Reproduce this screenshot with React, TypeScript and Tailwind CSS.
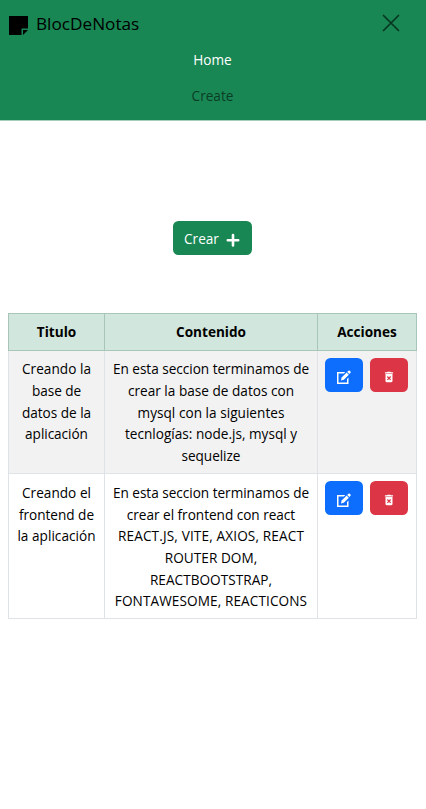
import React from "react";
import { MdDeleteForever } from "react-icons/md";

type Line = { text: string; track: string };
type Note = { title: Line[]; content: Line[] };

const notes: Note[] = [
  {
    title: [
      { text: "Creando la", track: "tracking-[0.05px]" },
      { text: "base de", track: "tracking-[-0.05px]" },
      { text: "datos de la", track: "tracking-[-0.02px]" },
      { text: "aplicación", track: "tracking-[-0.05px]" },
    ],
    content: [
      { text: "En esta seccion terminamos de", track: "tracking-[-0.02px]" },
      { text: "crear la base de datos con", track: "tracking-[0.01px]" },
      { text: "mysql con la siguientes", track: "tracking-[0.03px]" },
      { text: "tecnlogías: node.js, mysql y", track: "tracking-[0.01px]" },
      { text: "sequelize", track: "tracking-[-0.05px]" },
    ],
  },
  {
    title: [
      { text: "Creando el", track: "tracking-[0.03px]" },
      { text: "frontend de", track: "tracking-[-0.02px]" },
      { text: "la aplicación", track: "tracking-[0.03px]" },
    ],
    content: [
      { text: "En esta seccion terminamos de", track: "tracking-[-0.02px]" },
      { text: "crear el frontend con react", track: "tracking-[-0.02px]" },
      { text: "REACT.JS, VITE, AXIOS, REACT", track: "tracking-[0.14px]" },
      { text: "ROUTER DOM,", track: "tracking-[0.04px]" },
      { text: "REACTBOOTSTRAP,", track: "tracking-[0.04px]" },
      { text: "FONTAWESOME, REACTICONS", track: "tracking-[0.1px]" },
    ],
  },
];

function Lines({ lines }: { lines: Line[] }) {
  return (
    <div className="flex flex-col items-center whitespace-nowrap">
      {lines.map((l) => (
        <span key={l.text} className={l.track}>{l.text}</span>
      ))}
    </div>
  );
}

function NoteIcon() {
  return (
    <svg className="h-[19px] w-[19px]" viewBox="0 0 19 19" fill="#000">
      <path d="M0 0h19v12.500h-6.500V19H0z" />
      <path d="M14 19v-5h5z" />
    </svg>
  );
}

function PlusIcon() {
  return (
    <svg className="mt-[2px] h-[14px] w-[14px]" viewBox="0 0 14 14" fill="none" stroke="currentColor" strokeWidth="2.600" strokeLinecap="round">
      <path d="M7 2v10.500M1.800 7.200h10.400" />
    </svg>
  );
}

function EditIcon() {
  return (
    <svg className="mt-[4px] h-[14px] w-[14px]" viewBox="0 0 14 14" fill="currentColor">
      <path d="M8.300 2H0v12h11.500V7.500L10 9v3.500H1.500v-9h5.300z" />
      <path d="M4 10.500l.6-3L9.600 2.500l2.200 2.200-5 5z" />
      <path d="M10.200 1.900l1.200-1.200q.7-.6 1.400 0l.7.700q.6.700 0 1.400l-1.100 1.300z" />
    </svg>
  );
}

export default function App() {
  return (
    <div className="min-h-[809px] w-[426px] bg-white font-['Open_Sans','Noto_Sans',sans-serif] text-[13.6px] leading-[21.67px] text-black">
      <header className="h-[121px] border-b border-[#a3cfbb] bg-[#198754]">
        <div className="flex h-[46px] items-center justify-between pr-[26px] pl-[9px]">
          <a className="flex items-center gap-[8px]">
            <span className="mt-[4px]"><NoteIcon /></span>
            <span className="mt-[1px] text-[17.2px] leading-6">BlocDeNotas</span>
          </a>
          <svg className="h-[18px] w-[18px]" viewBox="0 0 18 18" stroke="#083520" strokeWidth="1.7" strokeLinecap="round">
            <path d="M1.500 1.500l15 15M16.500 1.500l-15 15" />
          </svg>
        </div>
        <nav className="flex flex-col items-center pr-[1px]">
          <a className="flex h-[28px] items-center text-white">Home</a>
          <a className="mt-[8px] flex h-[28px] items-center text-[#093d25]">Create</a>
        </nav>
      </header>
      <main>
        <div className="flex justify-center pt-[100px] pr-[2px]">
          <button className="flex h-[34px] w-[79px] items-center justify-center gap-[7px] rounded-[5.500px] bg-[#198754] pt-[2px] text-white">
            Crear
            <PlusIcon />
          </button>
        </div>
        <table className="mt-[58px] ml-[8px] w-[409px] table-fixed border-collapse text-center">
          <colgroup>
            <col className="w-[96px]" />
            <col className="w-[213px]" />
            <col />
          </colgroup>
          <thead>
            <tr className="h-[37px] bg-[#d1e7dd] font-bold">
              {["Titulo", "Contenido", "Acciones"].map((h) => (
                <th key={h} className="border border-[#a7c5b8] p-0">{h}</th>
              ))}
            </tr>
          </thead>
          <tbody>
            {notes.map((n, i) => (
              <tr key={i} className={i === 0 ? "h-[123px] bg-[#f2f2f2] align-top" : "h-[145px] align-top"}>
                <td className={i === 0 ? "border border-[#dfe2e6] p-0 pt-[7.400px]" : "border border-[#dfe2e6] p-0 pt-[8px]"}><Lines lines={n.title} /></td>
                <td className={i === 0 ? "border border-[#dfe2e6] p-0 pt-[7.400px]" : "border border-[#dfe2e6] p-0 pt-[8px]"}><Lines lines={n.content} /></td>
                <td className="border border-[#dfe2e6] p-0 pt-[7px]">
                  <div className="flex justify-center gap-[7px] pr-[0.500px]">
                    <button className="flex h-[34px] w-[38px] items-center justify-center rounded-[5.500px] bg-[#0d6efd] text-white">
                      <EditIcon />
                    </button>
                    <button className="flex h-[34px] w-[38px] items-center justify-center rounded-[5.500px] bg-[#dc3545] text-white">
                      <MdDeleteForever className="mt-[4px] h-[14px] w-[14px]" />
                    </button>
                  </div>
                </td>
              </tr>
            ))}
          </tbody>
        </table>
      </main>
    </div>
  );
}
